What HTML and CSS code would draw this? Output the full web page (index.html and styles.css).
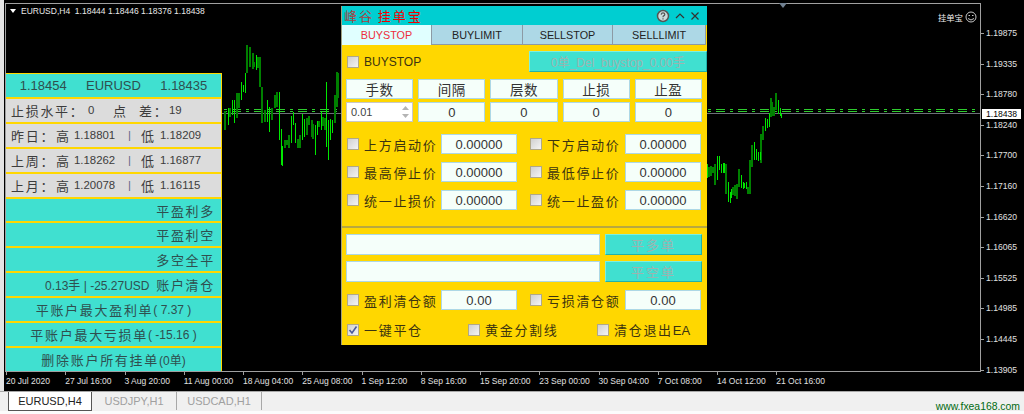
FILE: index.html
```html
<!DOCTYPE html>
<html lang="zh-CN">
<head>
  <meta charset="UTF-8">
  <title>EURUSD,H4</title>
  <link rel="stylesheet" href="styles.css">
</head>
<body>

<div class="window">
  <div class="plot">
    <!-- candles, using window coordinates -->
    <svg class="candles" width="1024" height="391" viewBox="0 0 1024 391">
      <path class="level" d="M6 109.5H980M6 111.5H980"/>
      <path class="last" d="M6 113.5H980"/>
      <path class="down" d="M225 111V130M230 108V117M237 93V118M239 93V108M247 45V73M250 47V67M253 53V69M254 62V67M258 57V68M260 57V87M262 87V123M265 110V122M272 108V120M275 95V108M277 92V107
        M285 140V148M287 140V145M289 135V148M298 139V148M300 135V148M307 118V135M309 116V125M312 120V137M313 124V139M319 121V127M323 117V126M325 118V130M335 95V123M337 72V107M338 73V98
        M709 167V177M711 166V176M713 167V173M715 164V185M726 164V194M733 187V195M735 185V196M737 184V199M739 169V187M748 187V194M750 160V194M752 145V167M761 134V163M763 126V140M771 98V117M772 102V116M774 107V116M776 93V110"/>
      <path class="up" d="M228.5 108V125M232.5 100V115M234.5 100V123M241.5 82V100M243.5 85V92M245.5 73V93M256.5 55V70M267.5 100V122M269.5 107V132M279.5 92V140
        M281.5 129V165M282.5 146V166M291.5 116V143M293.5 112V125M295.5 123V143M302.5 114V140M304.5 119V137M315.5 125V155M317.5 121V135M321.5 112V130M326.5 82V147M328.5 120V160M330.5 119V140M332.5 120V133
        M707.5 164V178M717.5 156V180M719.5 156V170M721.5 164V173M723.5 163V173M724.5 163V173M728.5 182V202M730.5 192V203M731.5 189V198M741.5 175V188M743.5 182V189M744.5 183V188M746.5 182V189M754.5 142V160M756.5 149V160M758.5 152V161M760.5 152V160M765.5 118V131M767.5 119V128M769.5 113V127M778.5 100V114M780.5 108V116M781.5 114V118"/>
      <path class="marker" d="M779 3H787L783 8Z"/>
    </svg>

    <div class="chart-title"><span class="title-arrow"></span>EURUSD,H4&nbsp; 1.18444 1.18446 1.18376 1.18438</div>

    <div class="chart-tag">
      挂单宝
      <svg width="12" height="12" viewBox="0 0 12 12">
        <circle cx="6" cy="6" r="5" fill="none" stroke="#c8c8c8"/>
        <path d="M3.5 4.5H5M7 4.5H8.5" stroke="#c8c8c8"/>
        <path d="M3 7.5Q6 10.5 9 7.5" fill="none" stroke="#c8c8c8"/>
      </svg>
    </div>

    <!-- account info panel -->
    <div class="info-panel">
      <div class="row row-quote"><span>1.18454</span><span>EURUSD</span><span>1.18435</span></div>
      <div class="row row-stop"><span class="cn">止损水平：</span><span>0</span><span class="cn">点</span><span class="cn">差：</span><span>19</span></div>
      <div class="row row-range"><span class="cn">昨日：</span><span class="cn">高</span><span>1.18801</span><span class="sep">|</span><span class="cn">低</span><span>1.18209</span></div>
      <div class="row row-range"><span class="cn">上周：</span><span class="cn">高</span><span>1.18262</span><span class="sep">|</span><span class="cn">低</span><span>1.16877</span></div>
      <div class="row row-range"><span class="cn">上月：</span><span class="cn">高</span><span>1.20078</span><span class="sep">|</span><span class="cn">低</span><span>1.16115</span></div>
      <div class="row row-right"><span class="cn">平盈利多</span></div>
      <div class="row row-right"><span class="cn">平盈利空</span></div>
      <div class="row row-right"><span class="cn">多空全平</span></div>
      <div class="row row-right"><span>0.13手 | -25.27USD&nbsp;</span>&nbsp;<span class="cn">账户清仓</span></div>
      <div class="row row-center"><span class="cn">平账户最大盈利单</span><span>( 7.37 )</span></div>
      <div class="row row-center"><span class="cn">平账户最大亏损单</span><span>( -15.16 )</span></div>
      <div class="row row-center"><span class="cn">删除账户所有挂单</span><span>(0单)</span></div>
    </div>

    <!-- pending order dialog -->
    <div class="dialog">
      <div class="dialog-title">
        <span class="dialog-name"><span class="name-dark">峰谷</span> 挂单宝</span>
        <span class="dialog-icons">
          <svg width="14" height="14" viewBox="0 0 14 14">
            <circle cx="7" cy="7" r="5.5" fill="#c9dcdc" stroke="#555" stroke-width="1.5"/>
            <path d="M5.2 5.6Q5.4 3.9 7 3.9Q8.8 3.9 8.8 5.4Q8.8 6.3 7.6 6.9Q7 7.2 7 8.3" fill="none" stroke="#555" stroke-width="1.2"/>
            <path d="M7 9.2V10.6" stroke="#555" stroke-width="1.2"/>
          </svg>
          <svg width="10" height="10" viewBox="0 0 10 10"><path d="M1 7L5 3L9 7" fill="none" stroke="#333" stroke-width="1.2"/></svg>
          <svg width="10" height="10" viewBox="0 0 10 10"><path d="M1.5 1.5L8.5 8.5M8.5 1.5L1.5 8.5" fill="none" stroke="#333" stroke-width="1.2"/></svg>
        </span>
      </div>

      <div class="tabs">
        <div class="tab tab-active">BUYSTOP</div>
        <div class="tab">BUYLIMIT</div>
        <div class="tab">SELLSTOP</div>
        <div class="tab">SELLLIMIT</div>
      </div>

      <div class="dialog-body">
        <div class="order-row">
          <label class="check-label"><span class="check"></span>BUYSTOP</label>
          <button class="btn btn-delete">0单_Del_buystop_0.00手</button>
        </div>

        <div class="params">
          <div class="cell head">手数</div>
          <div class="cell head">间隔</div>
          <div class="cell head">层数</div>
          <div class="cell head">止损</div>
          <div class="cell head">止盈</div>
          <div class="spinner">0.01
            <svg width="9" height="16" viewBox="0 0 9 16"><path d="M1 6L4.5 2L8 6Z M1 10L4.5 14L8 10Z" fill="#b4b4b4"/></svg>
          </div>
          <div class="cell">0</div>
          <div class="cell">0</div>
          <div class="cell">0</div>
          <div class="cell">0</div>
        </div>

        <div class="prices">
          <label class="check-label cn"><span class="check"></span>上方启动价</label><div class="cell">0.00000</div>
          <label class="check-label cn"><span class="check"></span>下方启动价</label><div class="cell">0.00000</div>
          <label class="check-label cn"><span class="check"></span>最高停止价</label><div class="cell">0.00000</div>
          <label class="check-label cn"><span class="check"></span>最低停止价</label><div class="cell">0.00000</div>
          <label class="check-label cn"><span class="check"></span>统一止损价</label><div class="cell">0.00000</div>
          <label class="check-label cn"><span class="check"></span>统一止盈价</label><div class="cell">0.00000</div>
        </div>

        <div class="divider"></div>

        <div class="close-rows">
          <div class="cell"></div><button class="btn btn-close cn">平多单</button>
          <div class="cell"></div><button class="btn btn-close cn">平空单</button>
        </div>

        <div class="prices prices-amount">
          <label class="check-label cn"><span class="check"></span>盈利清仓额</label><div class="cell">0.00</div>
          <label class="check-label cn"><span class="check"></span>亏损清仓额</label><div class="cell">0.00</div>
        </div>

        <div class="options">
          <label class="check-label cn"><span class="check"><svg width="10" height="10" viewBox="0 0 10 10"><path d="M1.5 5L4 8L8.5 1.5" fill="none" stroke="#4a5a9a" stroke-width="1.6"/></svg></span>一键平仓</label>
          <label class="check-label cn"><span class="check"></span>黄金分割线</label>
          <label class="check-label cn"><span class="check"></span><span>清仓退出<span class="latin">EA</span></span></label>
        </div>
      </div>
    </div>
  </div>

  <div class="price-axis">
    <div class="price">1.19875</div>
    <div class="price">1.19335</div>
    <div class="price">1.18780</div>
    <div class="price">1.18240</div>
    <div class="price">1.17700</div>
    <div class="price">1.17160</div>
    <div class="price">1.16620</div>
    <div class="price">1.16065</div>
    <div class="price">1.15525</div>
    <div class="price">1.14985</div>
    <div class="price">1.14445</div>
    <div class="price">1.13905</div>
    <div class="price-tag">1.18438</div>
  </div>

  <div class="time-axis">
    <div class="time">20 Jul 2020</div>
    <div class="time">27 Jul 16:00</div>
    <div class="time">3 Aug 20:00</div>
    <div class="time">11 Aug 00:00</div>
    <div class="time">18 Aug 04:00</div>
    <div class="time">25 Aug 08:00</div>
    <div class="time">1 Sep 12:00</div>
    <div class="time">8 Sep 16:00</div>
    <div class="time">15 Sep 20:00</div>
    <div class="time">23 Sep 00:00</div>
    <div class="time">30 Sep 04:00</div>
    <div class="time">7 Oct 08:00</div>
    <div class="time">14 Oct 12:00</div>
    <div class="time">21 Oct 16:00</div>
  </div>
</div>

<div class="tabbar">
  <div class="chart-tab chart-tab-active">EURUSD,H4</div>
  <div class="chart-tab">USDJPY,H1</div>
  <div class="chart-tab">USDCAD,H1</div>
  <div class="watermark">www.fxea168.com</div>
</div>

</body>
</html>
```

FILE: styles.css
```css
* {
  box-sizing: border-box;
}

body {
  margin: 0;
  width: 1024px;
  height: 414px;
  overflow: hidden;
  background-color: #f0f0f0;
  font-family: "Liberation Sans", "Noto Sans CJK SC", sans-serif;
  color: #333;
}

.cn {
  letter-spacing: 1.7px;
}

/* chart window */
.window {
  display: grid;
  grid-template-columns: 981px 43px;
  grid-template-rows: 372px 19px;
  height: 391px;
  background: linear-gradient(to right, #e4e4e4 4px, #000 4px);
}

.plot {
  position: relative;
  margin: 3px 0 0 5px;
  border: 1px solid #a0a0a0;
}

.candles {
  position: absolute;
  left: -6px;
  top: -4px;
}

.level {
  stroke: #2ecc2e;
  stroke-dasharray: 9 5 3 5;
  stroke-dashoffset: 16;
  fill: none;
}

.last {
  stroke: #6c7078;
  fill: none;
}

.down {
  stroke: #008000;
  stroke-width: 2;
  fill: none;
}

.up {
  stroke: #00e800;
  fill: none;
}

.marker {
  fill: #708090;
}

.chart-title {
  position: absolute;
  left: 4px;
  top: 1px;
  display: flex;
  align-items: center;
  font-size: 8.5px;
  line-height: 12px;
  color: #e8e8e8;
  white-space: nowrap;
}

.title-arrow {
  width: 0;
  height: 0;
  margin-right: 5px;
  border-left: 3px solid transparent;
  border-right: 3px solid transparent;
  border-top: 4px solid #fff;
}

.chart-tag {
  position: absolute;
  right: 3px;
  top: 7px;
  display: flex;
  align-items: center;
  gap: 2px;
  font-size: 8.4px;
  color: #eee;
}

/* price and time scales */
.price-axis {
  grid-column: 2;
  grid-row: 1 / 3;
  position: relative;
  padding-top: 18px;
}

.price {
  position: relative;
  height: 30.6px;
  line-height: 30.6px;
  padding-left: 5px;
  font-size: 8.6px;
  color: #e0e0e0;
}

.price::before {
  content: "";
  position: absolute;
  left: 0;
  top: 15px;
  width: 3px;
  height: 1px;
  background-color: #a0a0a0;
}

.price-tag {
  position: absolute;
  left: 1px;
  top: 109px;
  width: 39px;
  height: 10px;
  padding-left: 4px;
  background-color: #fff;
  color: #000;
  font-size: 8.6px;
  line-height: 10px;
}

.time-axis {
  display: grid;
  grid-template-columns: repeat(14, 59.25px);
  padding-left: 6px;
}

.time {
  position: relative;
  font-size: 8.5px;
  line-height: 18px;
  color: #e0e0e0;
  white-space: nowrap;
}

.time::before {
  content: "";
  position: absolute;
  left: 0;
  top: 0;
  width: 1px;
  height: 3px;
  background-color: #a0a0a0;
}

/* info panel on the left */
.info-panel {
  position: absolute;
  left: 0;
  top: 69px;
  width: 216px;
  height: 298px;
  display: grid;
  grid-template-rows: repeat(12, 1fr);
  background-color: #ffd700;
  border-right: 1px solid #ffd700;
  gap: 2px;
  padding: 1px 0 0;
  color: #2f4f4f;
}

.row {
  display: flex;
  align-items: center;
  background-color: #40e0d0;
  font-size: 12px;
  white-space: nowrap;
}

.row .cn {
  font-size: 13px;
}

.row-quote {
  justify-content: space-around;
  font-size: 13px;
  padding: 0 4px;
}

.row-stop,
.row-range {
  display: grid;
  align-items: center;
  background-color: #dcdcdc;
  color: #3c3c3c;
  padding-left: 5px;
  font-size: 11.4px;
}

.row-stop {
  grid-template-columns: 77px 25px 26px 30px auto;
}

.row-range {
  grid-template-columns: 45px 18px 54px 13px 19px auto;
}

.sep {
  color: #666688;
}

.row-right {
  justify-content: flex-end;
  padding-right: 6px;
}

.row-center {
  justify-content: center;
}

/* pending order dialog */
.dialog {
  position: absolute;
  left: 335px;
  top: 2px;
  width: 366px;
  height: 339px;
  display: flex;
  flex-direction: column;
  background-color: #ffd700;
  border-left: 1px solid #a0a080;
}

.dialog-title {
  display: flex;
  align-items: center;
  justify-content: space-between;
  height: 19px;
  flex-shrink: 0;
  padding: 0 7px 0 2px;
  background-color: #00ced1;
}

.dialog-name {
  font-size: 13px;
  letter-spacing: 2px;
  word-spacing: -2px;
  color: #f00000;
  white-space: nowrap;
}

.name-dark {
  color: #a84040;
}

.dialog-icons {
  display: flex;
  align-items: center;
  gap: 5px;
}

.tabs {
  display: grid;
  grid-template-columns: 90px 91px 90px 1fr;
  height: 20px;
  flex-shrink: 0;
  margin-right: 1px;
}

.tab {
  display: flex;
  align-items: center;
  justify-content: center;
  background-color: #add8e6;
  border: 1px solid #8c9aa4;
  border-left: 0;
  border-top: 0;
  font-size: 10.8px;
  color: #222;
}

.tab-active {
  background-color: #e0ffff;
  border-bottom: 0;
  color: #ee2c3c;
}

.dialog-body {
  flex: 1;
  padding: 6px 5px 0 4px;
}

.order-row {
  display: flex;
  align-items: center;
  justify-content: space-between;
  height: 21px;
  margin-right: -5px;
}

.check-label {
  display: flex;
  align-items: center;
  gap: 5px;
  padding-left: 1px;
  font-size: 13px;
  color: #3c3410;
  white-space: nowrap;
}

.order-row .check-label {
  font-size: 12px;
}

.check {
  display: flex;
  align-items: center;
  justify-content: center;
  width: 12px;
  height: 12px;
  flex-shrink: 0;
  background: linear-gradient(135deg, #d0d0d0, #f4f4f4);
  border: 1px solid #b0a888;
}

.latin {
  letter-spacing: 0;
}

.btn {
  padding: 0;
  font-family: inherit;
  background-color: #40e0d0;
  color: #9cb4b0;
  border: 1px solid;
  border-color: #7cf0e0 #20b2aa #20b2aa #7cf0e0;
}

.btn-delete {
  width: 178px;
  height: 21px;
  font-size: 12px;
}

.params {
  display: grid;
  grid-template-columns: repeat(5, 67.2px);
  grid-auto-rows: 20px;
  gap: 3px 5px;
  margin-top: 7px;
}

.cell {
  display: flex;
  align-items: center;
  justify-content: center;
  background-color: #f5fffa;
  border: 1px solid #add8e6;
  font-size: 13px;
  color: #333;
}

.head {
  font-size: 13.5px;
  letter-spacing: 0.5px;
}

.spinner {
  display: flex;
  align-items: center;
  justify-content: space-between;
  padding: 0 2px 0 4px;
  background-color: #fff;
  border: 1px solid #c8c8c8;
  font-size: 11px;
  color: #444;
}

.prices {
  display: grid;
  grid-template-columns: 95px 76px 108px 76px;
  grid-auto-rows: 20px;
  gap: 8px 0;
  margin-top: 12px;
}

.prices .check-label:nth-child(4n + 3) {
  padding-left: 13px;
}

.prices-amount {
  margin-top: 8px;
}

.divider {
  height: 2px;
  margin: 16px -5px 0 -4px;
  background-color: #b8a840;
}

.close-rows {
  display: grid;
  grid-template-columns: 254px 97px;
  grid-auto-rows: 21px;
  gap: 6px 5px;
  margin-top: 6px;
}

.btn-close {
  font-size: 13px;
  letter-spacing: 2px;
}

.options {
  display: grid;
  grid-template-columns: 121px 129px 1fr;
  margin-top: 10px;
  height: 18px;
  align-items: center;
}

/* chart tabs along the bottom */
.tabbar {
  position: relative;
  display: flex;
  height: 23px;
  padding-left: 8px;
  border-top: 1px solid #a8a8a8;
  border-bottom: 3px solid #fcfcfc;
  font-size: 11px;
  color: #a0a0a0;
}

.chart-tab {
  display: flex;
  align-items: center;
  justify-content: center;
  width: 85px;
  border-right: 1px solid #a8a8a8;
  height: 18px;
}

.chart-tab-active {
  width: 84px;
  background-color: #fff;
  border: 1px solid #555;
  border-top: 0;
  color: #222;
  height: 19px;
}

.watermark {
  position: absolute;
  right: 4px;
  bottom: -2px;
  font-size: 10.4px;
  line-height: 13px;
  color: #006a10;
}
```
